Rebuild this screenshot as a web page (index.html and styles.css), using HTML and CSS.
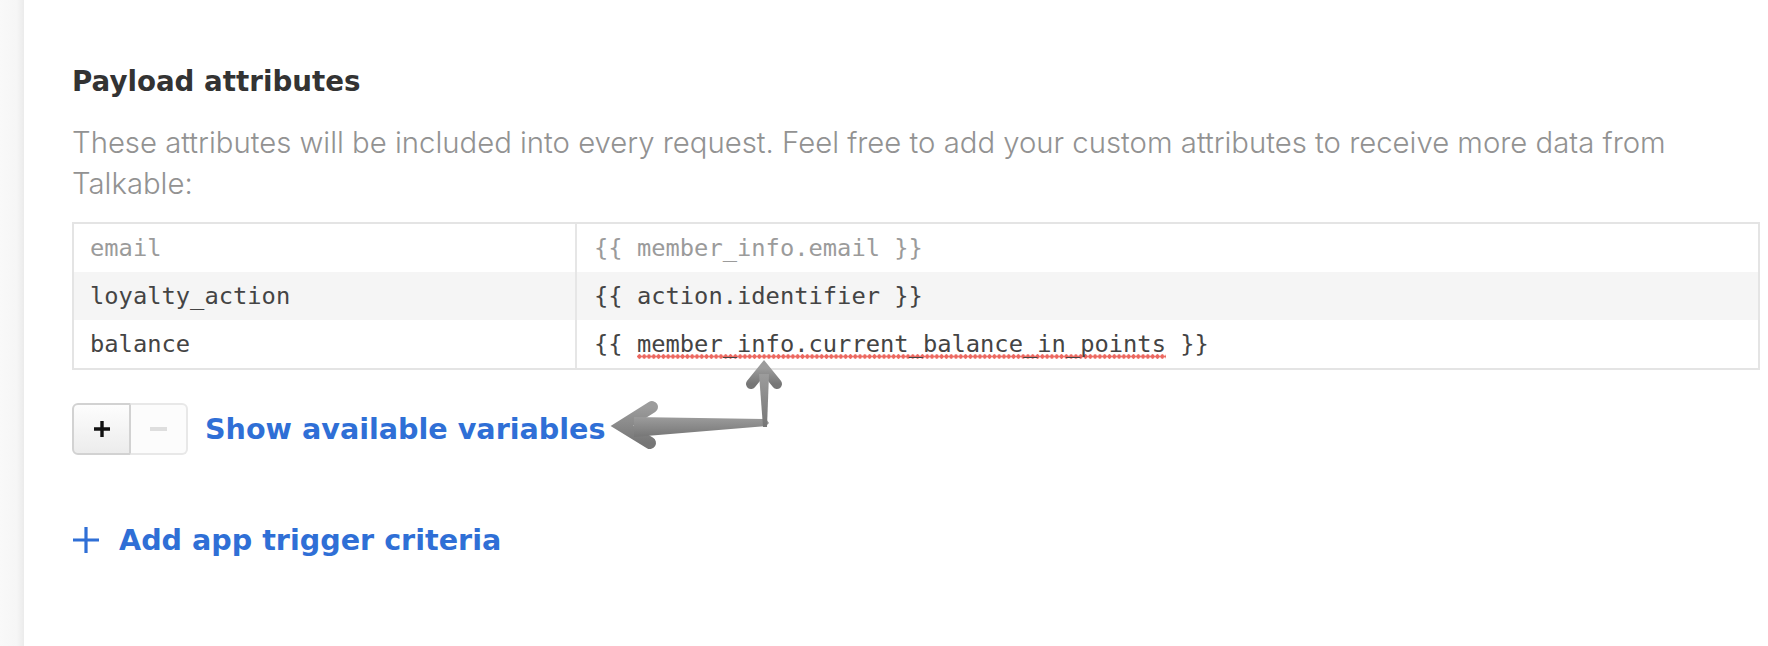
FILE: index.html
```html
<!DOCTYPE html>
<html>
<head>
<meta charset="utf-8">
<link rel="stylesheet" href="styles.css">
</head>
<body>
<div class="page">
  <aside class="sidebar"></aside>
  <main class="main">
    <h2 class="title">Payload attributes</h2>
    <p class="desc">These attributes will be included into every request. Feel free to add your custom attributes to receive more data from Talkable:</p>
    <div class="attr-table">
      <div class="row">
        <div class="cell key placeholder">email</div>
        <div class="cell val placeholder">{{ member_info.email }}</div>
      </div>
      <div class="row alt">
        <div class="cell key">loyalty_action</div>
        <div class="cell val">{{ action.identifier }}</div>
      </div>
      <div class="row">
        <div class="cell key">balance</div>
        <div class="cell val">{{ <span class="misspelled">member_info.current_balance_in_points</span> }}</div>
      </div>
    </div>
    <div class="controls">
      <div class="btn-group">
        <button class="btn btn-add" type="button"><svg width="16" height="16" viewBox="0 0 16 16"><path d="M6.3 0h3.4v6.3H16v3.4H9.7V16H6.3V9.7H0V6.3h6.3z" fill="#111"/></svg></button>
        <button class="btn btn-remove" type="button"><span class="minus"></span></button>
      </div>
      <a class="link link-vars">Show available variables</a>
    </div>
    <a class="link add-criteria"><svg class="plus-icon" width="28" height="28" viewBox="0 0 28 28"><path d="M14 1v26M1 14h26" stroke="#2f6fd6" stroke-width="3.2" fill="none"/></svg><span>Add app trigger criteria</span></a>
  </main>
</div>
<svg class="annot" width="200" height="110" viewBox="595 350 200 110">
  <defs>
    <linearGradient id="ag" x1="0" y1="0" x2="0" y2="1">
      <stop offset="0" stop-color="#9c9c9c"/>
      <stop offset="1" stop-color="#767676"/>
    </linearGradient>
  </defs>
  <g fill="url(#ag)" stroke="url(#ag)">
    <polyline points="652,407 622,426 650,443" fill="none" stroke-width="12" stroke-linecap="round" stroke-linejoin="miter"/>
    <polygon points="634,417 766,419 769,423 766,426 634,437" stroke="none"/>
    <polyline points="751,384 764,368 777,384" fill="none" stroke-width="10" stroke-linecap="round" stroke-linejoin="miter"/>
    <polygon points="759,374 769,374 767,427 763,427" stroke="none"/>
  </g>
</svg>
</body>
</html>
```
FILE: styles.css
```css
* { box-sizing: border-box; }
html, body { margin: 0; padding: 0; background: #fff; }
body { width: 1768px; height: 646px; overflow: hidden; position: relative; font-family: "DejaVu Sans", sans-serif; }
.page { display: flex; height: 646px; }
.sidebar { width: 24px; flex: none; background: linear-gradient(to right, #f9f9f9 0, #f6f6f6 70%, #ebebeb 100%); }
.main { flex: 1; padding: 66px 8px 0 48px; }
.title { margin: 0; font-size: 27.7px; line-height: 32px; font-weight: 700; color: #333; }
.desc { margin: 24px 0 0; font-family: "Inter", "DejaVu Sans", sans-serif; font-size: 29.3px; line-height: 41px; font-weight: 300; color: #929292; }
.attr-table { margin-top: 18px; border: 2px solid #e4e4e4; }
.row { display: flex; height: 48px; background: #fff; }
.row.alt { background: #f5f5f5; }
.cell { font-family: "DejaVu Sans Mono", monospace; font-size: 23.75px; line-height: 48px; color: #444; white-space: nowrap; }
.cell.key { width: 503px; padding-left: 16px; border-right: 2px solid #e6e6e6; flex: none; }
.cell.val { flex: 1; padding-left: 17px; }
.cell.placeholder { color: #9b9b9b; }
.misspelled { padding-bottom: 1px; background-image: radial-gradient(circle, #ec6860 1.9px, transparent 2.3px); background-repeat: repeat-x; background-size: 4.8px 4.8px; background-position: 0 100%; }
.controls { display: flex; align-items: center; margin-top: 33px; }
.btn-group { display: flex; width: 117px; height: 52px; }
.btn { width: 58px; height: 52px; margin: 0; padding: 0; display: flex; align-items: center; justify-content: center; }
.btn-add { background: linear-gradient(#fdfdfd, #ececec); border: 2px solid #d2d2d2; border-right-width: 1px; border-radius: 6px 0 0 6px; }
.btn-remove { background: #fcfcfc; border: 2px solid #e8e8e8; border-left: 1px solid #d2d2d2; border-radius: 0 6px 6px 0; }
.minus { display: block; width: 17px; height: 4px; background: #dedede; }
.link { color: #2f6fd6; font-weight: 700; text-decoration: none; }
.link-vars { margin-left: 16px; font-size: 28.6px; line-height: 32px; }
.add-criteria { display: flex; align-items: center; margin-top: 69px; font-size: 28.6px; line-height: 32px; }
.plus-icon { margin-right: 19px; }
.annot { position: absolute; left: 595px; top: 350px; }
```
